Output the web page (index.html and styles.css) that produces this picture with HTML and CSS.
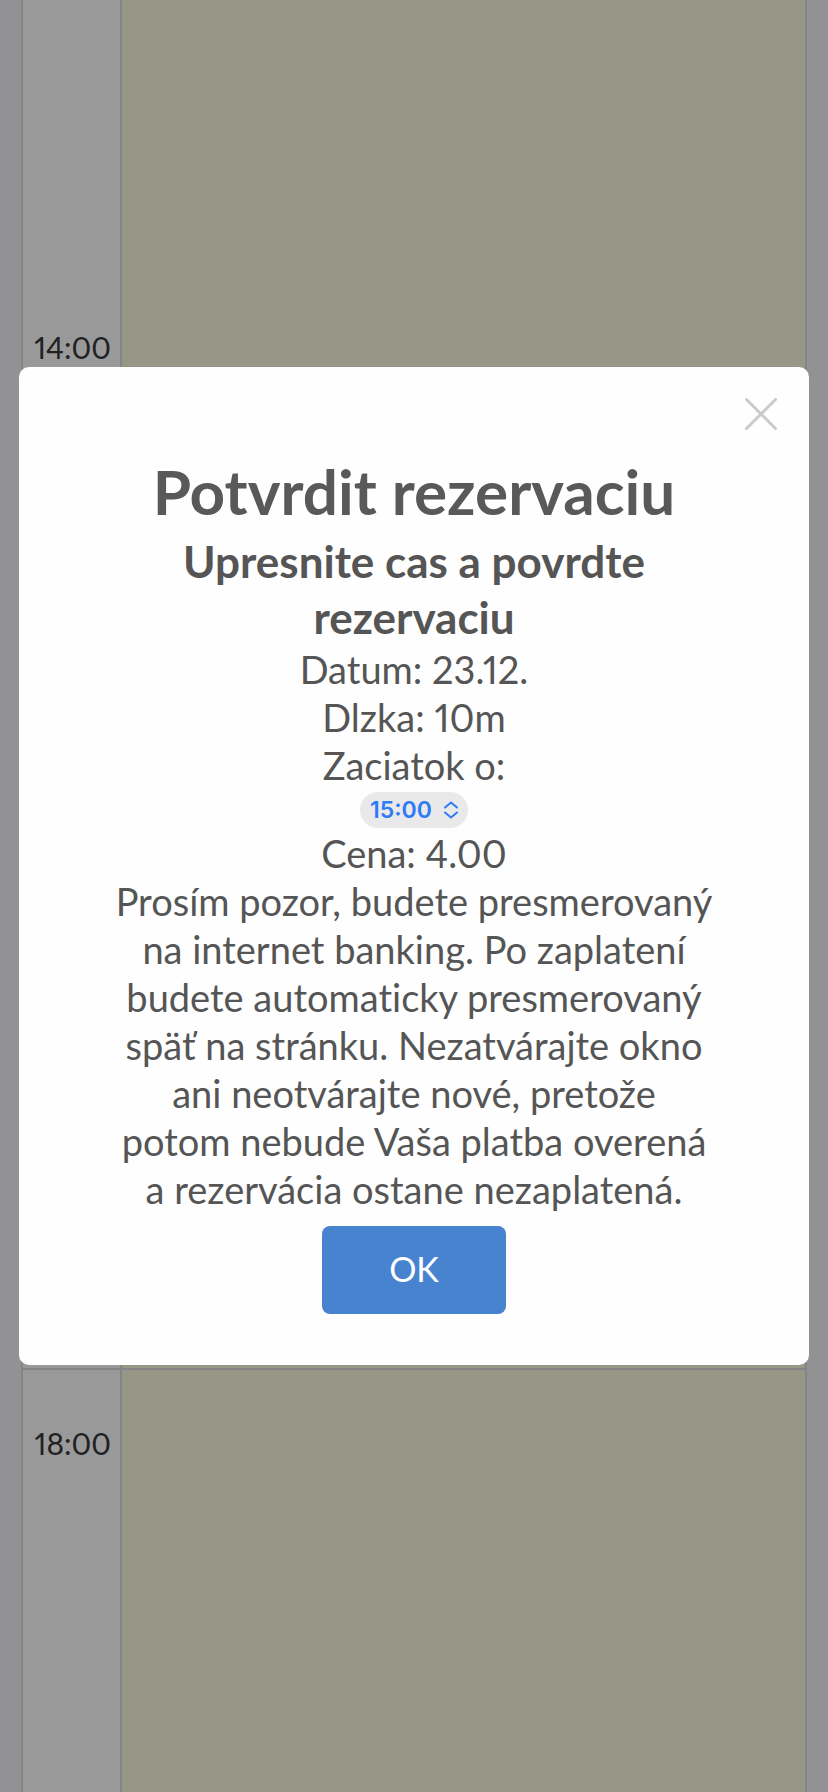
FILE: index.html
```html
<!DOCTYPE html>
<html lang="sk">
<head>
<meta charset="utf-8">
<meta name="viewport" content="width=device-width, initial-scale=1">
<title>Potvrdit rezervaciu</title>
<link rel="stylesheet" href="styles.css">
</head>
<body>
<main class="calendar">
  <div class="hour hour-first"><time class="hour-label">14:00</time><div class="slot"></div></div>
  <div class="hour"><time class="hour-label">18:00</time><div class="slot"></div></div>
</main>
<div class="overlay">
  <section class="modal" role="dialog" aria-modal="true" aria-labelledby="title">
    <button class="close" type="button" aria-label="Zavrieť">
      <svg viewBox="0 0 32 32" width="32" height="32" fill="none" stroke="#cacaca" stroke-width="3" stroke-linecap="round"><path d="M1.5 1.5 30.5 30.5M30.5 1.5 1.5 30.5"/></svg>
    </button>
    <h1 class="title" id="title">Potvrdit rezervaciu</h1>
    <h2 class="subtitle">Upresnite cas a povrdte<br>rezervaciu</h2>
    <p class="text">Datum: 23.12.</p>
    <p class="text">Dlzka: 10m</p>
    <label class="text" for="start">Zaciatok o:</label>
    <div class="picker">
      <select class="picker-select" id="start"><option>15:00</option></select>
      <svg class="picker-icon" viewBox="0 0 14 18" width="14" height="18" fill="none" stroke="#2f7bf6" stroke-width="2" stroke-linecap="round" stroke-linejoin="round"><path d="M1 6.5 7 1.5l6 5M1 11.5l6 5 6-5"/></svg>
    </div>
    <p class="text">Cena: 4.00</p>
    <p class="text">Prosím pozor, budete presmerovaný<br>na internet banking. Po zaplatení<br>budete automaticky presmerovaný<br>späť na stránku. Nezatvárajte okno<br>ani neotvárajte nové, pretože<br>potom nebude Vaša platba overená<br>a rezervácia ostane nezaplatená.</p>
    <button class="ok" type="button">OK</button>
  </section>
</div>
</body>
</html>
```
FILE: styles.css
```css
* { box-sizing: border-box; }

body {
  margin: 0;
  background: #929295;
  color: #555;
  font-family: Lato, "Noto Sans", sans-serif;
  font-variant-ligatures: none;
  font-variant-numeric: proportional-nums;
}

.calendar {
  display: flex;
  flex-direction: column;
  min-height: 100vh;
  margin: 0 21px;
  border: solid #858587;
  border-width: 0 2px;
}

.hour {
  display: grid;
  grid-template-columns: 99px 1fr;
  flex: 1;
  background: #999;
}

.hour-first {
  flex: 0 0 1370px;
  border-bottom: 2px solid #858587;
}

.hour-label {
  padding: 53px 9px 0 0;
  border-right: 2px solid #858587;
  color: #212121;
  font-size: 30px;
  line-height: 40px;
  text-align: right;
}

.hour-first .hour-label { padding-top: 327px; }

.slot { background: #989686; }

.overlay {
  position: fixed;
  inset: 0;
  display: grid;
  align-items: center;
  padding: 0 19px 60px;
}

.modal {
  position: relative;
  display: flex;
  flex-direction: column;
  align-items: center;
  padding: 86px 40px 51px;
  border-radius: 10px;
  background: #fefefe;
  text-align: center;
}

.close {
  position: absolute;
  top: 31px;
  right: 32px;
  display: flex;
  padding: 0;
  border: 0;
  background: none;
}

.title, .subtitle, .text { margin: 0; }

.title {
  margin-bottom: 4px;
  color: #595959;
  font-size: 62px;
  line-height: 76px;
}

.subtitle {
  font-size: 44px;
  line-height: 56px;
}

.text {
  font-size: 38px;
  line-height: 48px;
}

.picker {
  position: relative;
  margin: 3px 0 1px;
}

.picker-select {
  display: block;
  appearance: none;
  width: 108px;
  height: 36px;
  padding: 0 0 0 10px;
  border: 0;
  border-radius: 18px;
  background: #e9e9ea;
  color: #2f7bf6;
  font: 600 23px Inter, sans-serif;
}

.picker-icon {
  position: absolute;
  top: 9px;
  right: 10px;
  pointer-events: none;
}

.ok {
  width: 184px;
  height: 88px;
  margin-top: 13px;
  padding: 0 0 4px;
  border: 0;
  border-radius: 8px;
  background: #4883d0;
  color: #fff;
  font: 34px Lato, sans-serif;
}
```
